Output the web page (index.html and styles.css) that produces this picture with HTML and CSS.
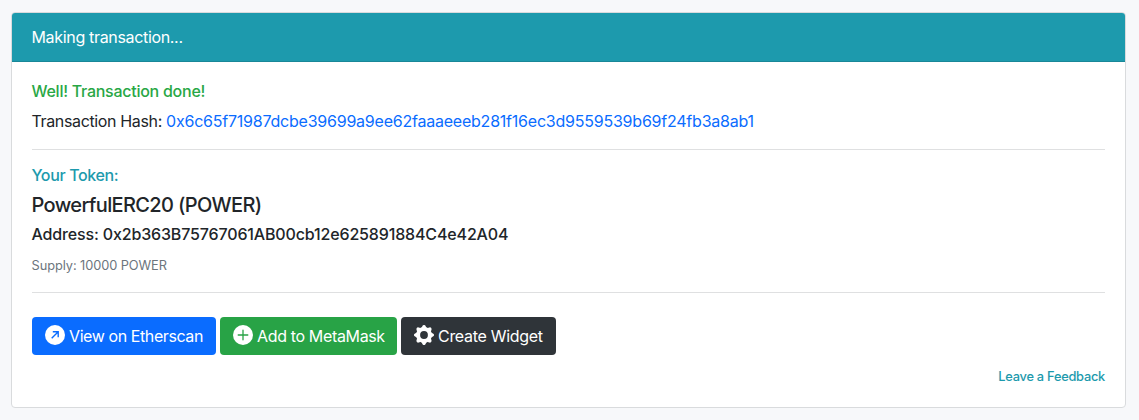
FILE: index.html
```
<!DOCTYPE html>
<html lang="en">
<head>
<meta charset="utf-8">
<title>Making transaction...</title>
<link rel="stylesheet" href="styles.css">
</head>
<body>
<main class="card">
  <header class="card-header"><span class="header-text">Making transaction...</span></header>
  <div class="card-body">
    <h6 class="status">Well! Transaction done!</h6>
    <p class="hash"><span class="hash-label">Transaction Hash:</span> <a class="hash-link" href="#">0x6c65f71987dcbe39699a9ee62faaaeeeb281f16ec3d9559539b69f24fb3a8ab1</a></p>
    <hr class="rule">
    <h6 class="section">Your Token:</h6>
    <h5 class="token">PowerfulERC20 (POWER)</h5>
    <h6 class="address">Address: 0x2b363B75767061AB00cb12e625891884C4e42A04</h6>
    <p class="supply">Supply: 10000 POWER</p>
    <hr class="rule">
    <div class="actions">
      <a class="btn btn-view" href="#">
        <svg class="icon" viewBox="0 0 20 20"><circle cx="10" cy="10" r="10" fill="#fff"/><path d="M6.7 13.3L13 7M7.8 6.8h5.4v5.4" fill="none" stroke="#0a6cff" stroke-width="1.4"/></svg>
        <span>View on Etherscan</span>
      </a>
      <a class="btn btn-add" href="#">
        <svg class="icon" viewBox="0 0 20 20"><circle cx="10" cy="10" r="10" fill="#fff"/><path d="M10 5.2v9.6M5.2 10h9.6" fill="none" stroke="#28a346" stroke-width="1.3" stroke-linecap="round"/></svg>
        <span>Add to MetaMask</span>
      </a>
      <a class="btn btn-widget" href="#">
        <svg class="icon" viewBox="0 0 20 20"><circle cx="10" cy="10" r="5.9" fill="none" stroke="#fff" stroke-width="4"/><g fill="#fff"><path id="teeth" d="M7.2 3.2L8.9.3Q10-.3 11.1.3L12.8 3.2zM7.2 16.8l1.7 2.9q1.1.6 2.2 0l1.7-2.9z"/><use href="#teeth" transform="rotate(45 10 10)"/><use href="#teeth" transform="rotate(90 10 10)"/><use href="#teeth" transform="rotate(135 10 10)"/></g></svg>
        <span>Create Widget</span>
      </a>
    </div>
    <a class="feedback" href="#">Leave a Feedback</a>
  </div>
</main>
</body>
</html>
```
FILE: styles.css
```
* { box-sizing: border-box; }
body {
  margin: 0;
  padding: 12px 13px 12px 11px;
  background: #f7f8fa;
  color: #212529;
  font: 400 16px/24px Inter, "Liberation Sans", sans-serif;
  letter-spacing: -0.3px;
}
h5, h6, p { margin: 0; white-space: nowrap; }
h5, h6, p, .header-text { text-indent: -0.5px; }
a { text-decoration: none; }
.card {
  height: 396px;
  background: #fff;
  border: 1px solid #d9dbdd;
  border-radius: 4px;
  overflow: hidden;
}
.card-header {
  height: 49px;
  padding: 12px 20px 12px 19.5px;
  background: #1d9aad;
  border-bottom: 1px solid #198798;
  color: #fff;
  letter-spacing: -0.33px;
}
.card-body {
  display: flex;
  flex-direction: column;
  padding: 20px;
}
.status, .section, .address { font-size: 16px; line-height: 19px; font-weight: 500; }
.status { color: #28a745; margin-bottom: 8px; letter-spacing: -0.26px; }
.hash-label { letter-spacing: -0.36px; }
.hash-link { color: #0a6cff; letter-spacing: -0.224px; }
.rule { width: 100%; height: 1px; margin: 16px 0; border: 0; background: #dfe0e1; }
.section { color: #1d9aad; margin-bottom: 8px; letter-spacing: -0.37px; }
.token { font-size: 20px; line-height: 24px; font-weight: 500; margin-bottom: 8px; letter-spacing: -0.64px; }
.address { margin-bottom: 10px; letter-spacing: -0.15px; }
.supply { font-size: 12.8px; line-height: 24px; color: #6c757d; margin-bottom: -2px; letter-spacing: -0.07px; }
.actions { display: flex; gap: 4px; margin-top: 8px; }
.btn {
  display: flex;
  align-items: center;
  gap: 4px;
  height: 38px;
  padding: 0 13px;
  border-radius: 4px;
  color: #fff;
  white-space: nowrap;
}
.btn-view { width: 184px; background: #0a6cff; letter-spacing: -0.41px; }
.btn-add { width: 177px; background: #28a346; letter-spacing: -0.35px; }
.btn-widget { width: 155px; background: #2f3439; }
.icon { width: 20px; height: 20px; flex: none; margin-top: -2px; }
.feedback {
  align-self: flex-end;
  margin-top: 12px;
  font-size: 12.8px;
  font-weight: 500;
  line-height: 20px;
  letter-spacing: -0.24px;
  color: #1d9aad;
}
```
